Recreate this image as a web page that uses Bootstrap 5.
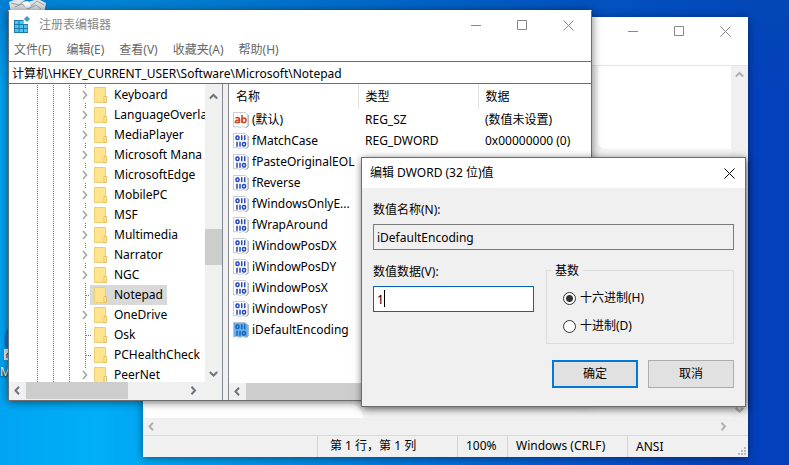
<!DOCTYPE html>
<html lang="zh-CN">
<head>
<meta charset="utf-8">
<meta name="viewport" content="width=device-width, initial-scale=1">
<title>注册表编辑器</title>
<link href="https://cdn.jsdelivr.net/npm/bootstrap@5.3.0/dist/css/bootstrap.min.css" rel="stylesheet">
<style>
body{font-family:"Noto Sans","Noto Sans CJK SC",sans-serif;font-size:12px;line-height:20px;color:#000}
button,input{font:inherit;color:inherit}
svg{display:block;flex:none}
.desktop{background:linear-gradient(90deg,#00a4f2 0,#00aff8 12%,#0094e8 32%,#0070d8 55%,#0552cc 76%,#0440bb 96%)}
.desktop::before{content:"";position:absolute;inset:0 0 auto 0;height:90px;background:linear-gradient(#0050b070,#0050b000)}
.desk-bin{left:9px;top:-6px}
.desk-app{left:0;top:322px;line-height:16px;color:#fff;text-shadow:0 1px 2px #000}
.win{background:#fff;border:1px solid #6c6c6c}
.win-notepad{left:143px;top:17px;width:605px;border:0;background:#fff;box-shadow:0 1px 8px #0007}
.win-reg{left:8px;top:10px;width:584px;border-top-color:#fff;box-shadow:0 1px 9px #0008}
.win-edit{left:361px;top:157px;width:385px;background:#f0f0f0;box-shadow:1px 2px 8px #0009}
.cap{width:46px;height:28px;border:0;background:none;padding:0;color:#888}
.cap svg{margin:auto}
.plain{border:0;background:none;padding:0}
.notepad-head{height:49px;border-bottom:1px solid #e5e5e5}
.doc{height:352px;background:#f3f3f3}
.doc-top{height:83px;width:133px;border-bottom-left-radius:8px}
.doc-foot{height:14px;width:220px;border-top-right-radius:14px}
.sbar{background:#f0f0f0}
.sbar-dim{color:#b0b0b0}
.sbar-v{width:17px}
.sbar-h{height:17px}
.thumb{background:#cdcdcd}
.thumb-v{height:36px}
.thumb-h{width:102px}
.status{height:22px;background:#f0f0f0;border-top:1px solid #d9d9d9}
.status>span{border-left:1px solid #d4d4d4;padding-left:8px}
.status>.st-pos{width:140px;padding-left:12px}.st-zoom{width:50px}.st-eol{width:120px}.st-enc{width:121px}
.reg-title{color:#888;height:28px}
.reg-menu{height:22px;gap:15px;padding-left:5px;color:#666}
.reg-menu a{color:inherit;text-decoration:none}
.addr{height:23px;border:1px solid #6e6e6e;border-width:1px 0;padding:0 3px;outline:0;width:100%}
.panes{height:316px;background:#f0f0f0;gap:5px}
.pane-tree{width:214px;border-right:1px solid #828790}
.pane-list{border-left:1px solid #828790;background:#fff;min-width:0}
.tree{overflow:hidden;height:298px;padding-top:1px;min-width:0}
.tree-row{height:20px;white-space:nowrap}
.guide{width:16px;height:20px;flex:none;background:repeating-linear-gradient(#777 0 1px,#fff 1px 2px) 12px 0/1px 20px no-repeat}
.leaf::after{content:"";display:block;margin:10px 0 0 13px;width:5px;height:1px;background:repeating-linear-gradient(90deg,#777 0 1px,#fff 1px 2px)}
.guide-first{margin-left:16px}
.tree-row .name{padding:0 4px;margin-left:2px;text-decoration:none;color:#000}
.tree-row.sel .pick{background:#d9d9d9}
.tree-row .pick{padding-left:4px;margin-left:1px}
.knob{padding:2px 0 0 7px}
.vals{table-layout:fixed;width:100%;border-collapse:collapse}
.vals th{font-weight:400;height:25px;padding:0 7px;border-right:1px solid #e2e2e2}
.vals th:last-child{border:0}
.vals td{height:21px;padding:0 7px;white-space:nowrap;line-height:20px}
.vals td:first-child{padding:0 0 0 4px}
.vals .vname{padding-left:3px}
.c1{width:129px}.c2{width:120px}
.edit-title{height:30px;padding:0 10px 0 8px;background:#fff}
.edit-body{padding:12px 11px 18px}
.field{width:100%;height:26px;border:1px solid #7a7a7a;background:#f0f0f0;padding:0 3px;outline:0;border-radius:0}
.field-live{width:161px;border-color:#0067b8;background:#fff}
.caret{left:11px;top:4px;width:1px;height:17px;background:#000}
.base{border:1px solid #dcdcdc;width:188px;height:74px;margin-top:12px;padding:17px 0 0 16px}
.base legend{font-size:12px;line-height:20px;left:4px;top:-10px;width:auto;background:#f0f0f0;padding:0 4px;float:none}
.radio{appearance:none;width:13px;height:13px;border:1px solid #333;border-radius:50%;background:#fff;margin:0;flex:none}
.radio:checked{background:radial-gradient(circle,#333 0 3px,#fff 4px)}
.acts{gap:10px}
.act{width:86px;height:28px;background:#e1e1e1;border:1px solid #adadad;padding:0}
.act-main{border:2px solid #0078d7}
</style>
<script src="https://cdn.jsdelivr.net/npm/bootstrap@5.3.0/dist/js/bootstrap.bundle.min.js"></script>
</head>
<body>
<svg width="0" height="0" class="position-absolute" aria-hidden="true">
<defs>
<symbol id="min" viewBox="0 0 11 11"><path d="M0 5.5h10" stroke="currentColor"/></symbol>
<symbol id="max" viewBox="0 0 11 11"><path d="M.5.5h9v9h-9z" fill="none" stroke="currentColor"/></symbol>
<symbol id="cls" viewBox="0 0 11 11"><path d="M.5.5l10 10M10.5.5l-10 10" stroke="currentColor"/></symbol>
<symbol id="right" viewBox="0 0 9 9"><path d="M2.500 .8L6 4.500 2.500 8.200" fill="none" stroke="currentColor" stroke-width="2"/></symbol>
<symbol id="left" viewBox="0 0 9 9"><path d="M6 .8L2.500 4.500 6 8.200" fill="none" stroke="currentColor" stroke-width="2"/></symbol>
<symbol id="up" viewBox="0 0 9 9"><path d="M.8 6.500L4.500 3l3.700 3.500" fill="none" stroke="currentColor" stroke-width="2"/></symbol>
<symbol id="down" viewBox="0 0 9 9"><path d="M.8 3l3.700 3.500L8.200 3" fill="none" stroke="currentColor" stroke-width="2"/></symbol>
<symbol id="folder" viewBox="0 0 14 16"><path d="M.5.5h11v15H.5z" fill="#ffe48f" stroke="#edcd6c"/><path d="M10 9.500h2.500v6H10z" fill="#ffeaa8" stroke="#dfb64e" stroke-width=".8"/></symbol>
<symbol id="page" viewBox="0 0 16 16"><path d="M.5.5h11.500l3 2.500v11l-2 1.500-3-1-3 1-3-1-3.500.5z" fill="var(--paper,#fff)" stroke="#b9c0c8" stroke-width=".8"/><path d="M15.200 3v11l-2.200 1.500" fill="none" stroke="#8e979f" stroke-width=".8"/></symbol>
<symbol id="bin" viewBox="0 0 16 16"><use href="#page"/><g fill="none" stroke="var(--ink,#2546b8)" stroke-width="1.500"><rect x="3" y="3" width="3" height="3.500" rx="1.200"/><path d="M8.700 2.300v5M11.700 2.300v5M4 8.700v5M7 8.700v5"/><rect x="9.500" y="9.400" width="3" height="3.500" rx="1.200"/></g></symbol>
<symbol id="str" viewBox="0 0 16 16"><use href="#page"/><g fill="none" stroke="#cf4a25" stroke-width="1.600"><path d="M2.500 6.200c1.500-1 4-.8 4 1v3.800M6.500 8.200c-5-.3-5 2.500-3 2.500 1.500 0 3-.8 3-1.700"/><path d="M9 3v8"/><ellipse cx="11" cy="8.300" rx="2" ry="2.300"/></g></symbol>
</defs>
</svg>
<main class="desktop position-relative min-vh-100 overflow-hidden">
  <svg class="desk-bin position-absolute" width="38" height="26" viewBox="0 0 38 26"><path d="M0 8L10 4l9 4 10-3 8 4-3 16H3z" fill="#e2e6e9"/><path d="M2 9l8 2 5-4 7 5 6-5 7 4M6 13l7-3 6 5 8-4 5 4" fill="none" stroke="#9aa4ab"/><path d="M14 9l5-2 3 5-5 2z" fill="#fff"/></svg>
  <div class="desk-app position-absolute"><svg width="14" height="42" viewBox="0 0 14 42"><path d="M14 2C6 5 3 12 5 26h9z" fill="#1475cc"/><path d="M4 27h10v11H4z" fill="#e9edf0"/><path d="M7 36v-4l4-3" stroke="#333" fill="none"/></svg>M</div>

  <section class="win-notepad position-absolute" aria-label="记事本">
    <header class="notepad-head d-flex justify-content-end">
      <button class="cap" aria-label="最小化"><svg width="11" height="11"><use href="#min"/></svg></button>
      <button class="cap" aria-label="最大化"><svg width="11" height="11"><use href="#max"/></svg></button>
      <button class="cap" aria-label="关闭"><svg width="11" height="11"><use href="#cls"/></svg></button>
    </header>
    <div class="doc d-flex">
      <div class="flex-grow-1 d-flex flex-column justify-content-between">
        <div class="doc-top bg-white align-self-end"></div>
        <div class="doc-foot bg-white"></div>
      </div>
      <div class="sbar sbar-v sbar-dim d-flex flex-column justify-content-between align-items-center py-1">
        <svg width="9" height="9"><use href="#up"/></svg>
        <svg width="9" height="9"><use href="#down"/></svg>
      </div>
    </div>
    <div class="sbar sbar-h sbar-dim d-flex justify-content-between align-items-center ps-1 pe-3">
      <svg width="9" height="9"><use href="#left"/></svg>
      <svg class="me-1" width="9" height="9"><use href="#right"/></svg>
    </div>
    <footer class="status d-flex justify-content-end">
      <span class="st-pos">第 1 行，第 1 列</span><span class="st-zoom">100%</span><span class="st-eol">Windows (CRLF)</span><span class="st-enc d-flex justify-content-between align-items-end"><span>ANSI</span>
      <svg width="11" height="11" viewBox="0 0 11 11"><path d="M7 1h2v2H7zM4 4h2v2H4zM7 4h2v2H7zM1 7h2v2H1zM4 7h2v2H4zM7 7h2v2H7z" fill="#bbb"/></svg></span>
    </footer>
  </section>

  <section class="win win-reg position-absolute" aria-label="注册表编辑器">
    <header class="reg-title d-flex align-items-center">
      <svg class="ms-1" width="18" height="18" viewBox="-2 -2 18 18"><path d="M-1 2H13V15H-1z" fill="#1c7ba6"/><path d="M0 3h3.500v3H0zM4.500 3H8v3H4.500zM0 7h3.500v3H0zM4.500 7H8v3H4.500zM9 7h3.500v3H9zM0 11h3.500v3H0zM4.500 11H8v3H4.500zM9 11h3.500v3H9z" fill="#48c6ee"/><path d="M8.500 1H14v5H8.500z" fill="#fff"/><path d="M12-1.500l2.500 2.500L12 3.500 9.500 1z" fill="#35a9d6" stroke="#1c6f98" stroke-width=".7"/></svg>
      <span class="flex-grow-1 ps-1 ms-1">注册表编辑器</span>
      <button class="cap" aria-label="最小化"><svg width="11" height="11"><use href="#min"/></svg></button>
      <button class="cap" aria-label="最大化"><svg width="11" height="11"><use href="#max"/></svg></button>
      <button class="cap" aria-label="关闭"><svg width="11" height="11"><use href="#cls"/></svg></button>
    </header>
    <nav class="reg-menu d-flex align-items-center"><a href="#">文件(F)</a><a href="#">编辑(E)</a><a href="#">查看(V)</a><a href="#">收藏夹(A)</a><a href="#">帮助(H)</a></nav>
    <input class="addr d-block" aria-label="地址" value="计算机\HKEY_CURRENT_USER\Software\Microsoft\Notepad">
    <div class="panes d-flex">
      <div class="pane-tree flex-shrink-0 d-flex flex-column">
        <div class="d-flex bg-white">
          <div class="tree flex-grow-1" id="tree"></div>
          <div class="sbar sbar-v flex-shrink-0 d-flex flex-column align-items-center py-1 text-secondary">
            <svg class="mt-1" width="9" height="9"><use href="#up"/></svg>
            <div class="flex-grow-1 w-100 d-flex flex-column justify-content-center pt-4"><div class="thumb thumb-v w-100"></div></div>
            <svg width="9" height="9"><use href="#down"/></svg>
          </div>
        </div>
        <div class="sbar sbar-h d-flex align-items-center ps-1 text-secondary">
          <svg width="9" height="9"><use href="#left"/></svg>
          <div class="thumb thumb-h h-100 ms-1"></div>
          <svg class="ms-auto me-4" width="9" height="9"><use href="#right"/></svg>
        </div>
      </div>
      <div class="pane-list flex-grow-1 d-flex flex-column justify-content-between">
        <table class="vals"><colgroup><col class="c1"><col class="c2"><col></colgroup>
          <thead><tr><th>名称</th><th>类型</th><th>数据</th></tr></thead>
          <tbody id="vals"></tbody>
        </table>
        <div class="sbar sbar-h d-flex align-items-center ps-1 text-secondary">
          <svg width="9" height="9"><use href="#left"/></svg>
          <div class="thumb h-100 ms-1 w-75"></div>
        </div>
      </div>
    </div>
  </section>

  <form class="win win-edit position-absolute" aria-label="编辑 DWORD (32 位)值">
    <header class="edit-title d-flex align-items-center justify-content-between"><span>编辑 DWORD (32 位)值</span>
      <button type="button" class="plain text-black" aria-label="关闭"><svg width="11" height="11"><use href="#cls"/></svg></button></header>
    <div class="edit-body">
      <label for="vname" class="d-block mb-1">数值名称(N):</label>
      <input id="vname" class="field d-block" readonly value="iDefaultEncoding">
      <div class="d-flex justify-content-between mt-2">
        <div class="pt-1">
          <label for="vdata" class="d-block mb-1">数值数据(V):</label>
          <div class="position-relative"><input id="vdata" class="field field-live d-block" value="1"><span class="caret position-absolute"></span></div>
        </div>
        <fieldset class="base position-relative"><legend class="position-absolute">基数</legend>
          <label class="d-flex align-items-center gap-1 mb-2"><input class="radio" type="radio" name="base" checked>十六进制(H)</label>
          <label class="d-flex align-items-center gap-1"><input class="radio" type="radio" name="base">十进制(D)</label>
        </fieldset>
      </div>
      <div class="acts d-flex justify-content-end mt-3"><button type="button" class="act act-main">确定</button><button type="button" class="act">取消</button></div>
    </div>
  </form>
</main>
<script>
const keys=["Keyboard","LanguageOverla","MediaPlayer","Microsoft Mana","MicrosoftEdge","MobilePC","MSF","Multimedia","Narrator","NGC","Notepad","OneDrive","Osk","PCHealthCheck","PeerNet"];
const leaves=["Notepad","Osk","PCHealthCheck"];
document.getElementById("tree").innerHTML=keys.map(k=>{
  const leaf=leaves.includes(k);
  const end=leaf?'<span class="guide leaf"></span>':'<span class="guide knob"><svg width="9" height="16" viewBox="0 0 9 16"><path d="M0 1h9v14H0z" fill="#fff"/><path d="M3 4l3.500 4L3 12" fill="none" stroke="#a6a6a6" stroke-width="1.600"/></svg></span>';
  return `<div class="tree-row d-flex ${k==="Notepad"?"sel":""}"><span class="guide guide-first"></span><span class="guide"></span><span class="guide"></span>${end}<span class="pick d-flex align-items-center"><svg width="14" height="16"><use href="#folder"/></svg><a class="name" href="#">${k}</a></span></div>`;
}).join("");
const names=["(默认)","fMatchCase","fPasteOriginalEOL","fReverse","fWindowsOnlyE...","fWrapAround","iWindowPosDX","iWindowPosDY","iWindowPosX","iWindowPosY","iDefaultEncoding"];
document.getElementById("vals").innerHTML=names.map((n,i)=>{
  const t=i===0?"REG_SZ":i<3?"REG_DWORD":"", d=i===0?"(数值未设置)":i<3?"0x00000000 (0)":"";
  const s=i===10?' style="--paper:#66b3f0;--ink:#1763b5"':'';
  return `<tr><td><span class="d-flex align-items-center"><svg width="16" height="16"${s}><use href="#${i?"bin":"str"}"/></svg><span class="vname">${n}</span></span></td><td>${t}</td><td>${d}</td></tr>`;
}).join("");
</script>
</body>
</html>
